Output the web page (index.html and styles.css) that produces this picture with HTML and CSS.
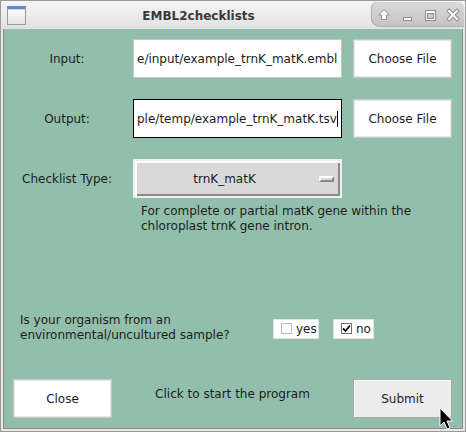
FILE: index.html
```html
<!DOCTYPE html>
<html>
<head>
<meta charset="utf-8">
<title>EMBL2checklists</title>
<link rel="stylesheet" href="styles.css">
</head>
<body>
<div class="window">
  <div class="titlebar">
    <div class="app-icon"></div>
    <div class="title">EMBL2checklists</div>
    <div class="wm-buttons">
      <svg width="93" height="25" viewBox="0 0 93 25">
        <polygon points="13,7.5 18.5,13 15.5,13 15.5,17.5 10.5,17.5 10.5,13 7.5,13" fill="#fff" stroke="#8a8a8a" stroke-width="1"/>
        <rect x="32.5" y="15.5" width="8" height="3" fill="#fff" stroke="#8a8a8a" stroke-width="1"/>
        <rect x="54.5" y="8.5" width="10" height="10" fill="#fff" stroke="#8a8a8a" stroke-width="1"/>
        <rect x="56.5" y="11.5" width="6" height="5" fill="#cbcbcb" stroke="#8a8a8a" stroke-width="1"/>
        <g stroke-linecap="square">
          <line x1="78" y1="9" x2="86" y2="17" stroke="#8a8a8a" stroke-width="4"/>
          <line x1="86" y1="9" x2="78" y2="17" stroke="#8a8a8a" stroke-width="4"/>
          <line x1="78" y1="9" x2="86" y2="17" stroke="#fff" stroke-width="2"/>
          <line x1="86" y1="9" x2="78" y2="17" stroke="#fff" stroke-width="2"/>
        </g>
      </svg>
    </div>
  </div>
  <div class="content">
    <div class="form-grid">
      <div class="label">Input:</div>
      <div class="entry">e/input/example_trnK_matK.embl</div>
      <button class="btn">Choose File</button>

      <div class="label">Output:</div>
      <div class="entry focused">ple/temp/example_trnK_matK.tsv<span class="caret"></span></div>
      <button class="btn">Choose File</button>

      <div class="label">Checklist Type:</div>
      <div class="menubutton"><span class="menu-text">trnK_matK</span><span class="indicator"></span></div>
    </div>

    <p class="desc">For complete or partial matK gene within the<br>chloroplast trnK gene intron.</p>

    <div class="question-row">
      <div class="question">Is your organism from an<br>environmental/uncultured sample?</div>
      <div class="check yes"><span class="box"></span>yes</div>
      <div class="check no"><span class="box checked"><svg width="9" height="9" viewBox="0 0 9 9"><path d="M1 4.5 L3.5 7 L8 1.5" fill="none" stroke="#000" stroke-width="1.8"/></svg></span>no</div>
    </div>

    <div class="action-row">
      <button class="btn">Close</button>
      <div class="hint">Click to start the program</div>
      <button class="btn submit">Submit</button>
    </div>

    <svg class="cursor" width="15" height="24" viewBox="0 0 15 24">
      <path d="M1 1 V19 L5 15 L8 22 L11 20.8 L8 14 H13.5 Z" fill="#000" stroke="#fff" stroke-width="1" stroke-linejoin="round"/>
    </svg>
  </div>
</div>
</body>
</html>
```

FILE: styles.css
```css
* {
  box-sizing: border-box;
}

body {
  margin: 0;
  font-family: "DejaVu Sans", sans-serif;
  font-size: 12px;
  color: #1c1c1c;
}

.window {
  width: 466px;
  height: 432px;
  border: 1px solid #9a9a9a;
  background: #e8e8e8;
  display: flex;
  flex-direction: column;
}

.titlebar {
  height: 28px;
  display: flex;
  align-items: center;
  background: linear-gradient(#f5f5f5, #e1e1e1);
}

.app-icon {
  width: 19px;
  height: 19px;
  margin-left: 6px;
  border: 1px solid #9a9a9a;
  border-top: 3px solid #5b88cf;
  background: linear-gradient(#fbfbfb, #e4e4e4);
  box-shadow: inset 0 1px 0 #c9d6ea;
}

.title {
  flex: 1;
  text-align: center;
  font-weight: bold;
  color: #383838;
  padding-top: 1px;
}

.wm-buttons {
  align-self: flex-start;
  margin-top: 1px;
  margin-right: 1px;
  width: 93px;
  height: 25px;
  border-radius: 6px 6px 0 9px;
  background: linear-gradient(#dadada, #c3c3c3);
  box-shadow: inset 1px 0 0 #b0b0b0, inset 0 -1px 0 #b0b0b0;
}

.wm-buttons svg {
  display: block;
}

.content {
  flex: 1;
  margin: 0 2px 2px;
  border: 1px solid #8c8c8c;
  border-top: none;
  background: #91bfac;
  position: relative;
}

.form-grid {
  display: grid;
  grid-template-columns: 118px 209px 99px;
  grid-auto-rows: 39px;
  column-gap: 11px;
  row-gap: 21px;
  padding-top: 10px;
}

.label {
  display: flex;
  align-items: center;
  justify-content: center;
  padding-left: 8px;
  white-space: nowrap;
}

.entry {
  background: #fff;
  border: 1px solid #c6c6c6;
  padding: 0 3px;
  display: flex;
  align-items: center;
  overflow: hidden;
  white-space: nowrap;
}

.entry.focused {
  border-color: #000;
}

.caret {
  display: inline-block;
  width: 2px;
  height: 16px;
  background: #000;
  margin-left: 0;
}

.btn {
  font: inherit;
  color: inherit;
  background: #fff;
  border: 1px solid #c8c8c8;
  box-shadow: inset 0 0 0 1px #e6e6e6;
  padding: 0;
  height: 39px;
  width: 99px;
}

.btn.submit {
  background: #ececec;
  border-color: #a9a9a9;
  box-shadow: inset 1px 1px 0 #fafafa;
}

.menubutton {
  background: #d9d9d9;
  border: 2px solid #efefef;
  box-shadow: inset 2px 2px 0 #fff, inset -2px -2px 0 #8b8b8b;
  display: flex;
  align-items: center;
  padding-right: 6px;
}

.menu-text {
  flex: 1;
  text-align: center;
  padding-left: 2px;
}

.indicator {
  width: 15px;
  height: 6px;
  margin-left: 7px;
  background: #d9d9d9;
  border: 2px solid;
  border-color: #fff #8b8b8b #8b8b8b #fff;
}

.desc {
  margin: 6px 0 0 137px;
  line-height: 15px;
}

.question-row {
  display: flex;
  align-items: center;
  margin-top: 79px;
  padding-left: 16px;
}

.question {
  width: 253px;
  line-height: 15px;
}

.check {
  height: 20px;
  background: #fff;
  border: 1px solid #e2e2e2;
  display: flex;
  align-items: center;
  padding-left: 7px;
  margin-top: 1px;
}

.check.yes {
  width: 46px;
}

.check.no {
  width: 41px;
  margin-left: 14px;
}

.box {
  width: 11px;
  height: 11px;
  border: 1px solid #bcbcbc;
  background: #fff;
  margin-right: 4px;
  display: flex;
  align-items: center;
  justify-content: center;
}

.box.checked {
  border-color: #6e6e6e;
}

.box svg {
  display: block;
}

.action-row {
  display: flex;
  align-items: center;
  margin-top: 36px;
  padding: 0 10px 0 9px;
}

.hint {
  flex: 1;
  text-align: center;
  margin-bottom: 10px;
}

.cursor {
  position: absolute;
  left: 435px;
  top: 378px;
}
```
